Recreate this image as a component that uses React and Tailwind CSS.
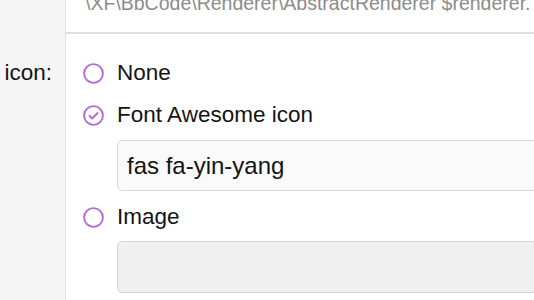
import { useState } from "react";

function Radio({ checked }) {
  return (
    <svg width="21" height="21" viewBox="0 0 21 21" className="shrink-0">
      <circle cx="10.5" cy="10.5" r="9.4" fill="none" stroke="#b168d9" strokeWidth="1.9" />
      {checked && (
        <path d="M6.4 10.8 L9.2 13.5 L14.6 8" fill="none" stroke="#b168d9" strokeWidth="1.9" strokeLinecap="round" strokeLinejoin="round" />
      )}
    </svg>
  );
}

function Option({ label, checked, onClick }) {
  return (
    <div className="flex items-center h-[42px] gap-[13px] cursor-pointer" onClick={onClick}>
      <Radio checked={checked} />
      <span className="text-[22.5px] text-[#141414] leading-none">{label}</span>
    </div>
  );
}

export default function App() {
  const [mode, setMode] = useState("fa");
  const [icon, setIcon] = useState("fas fa-yin-yang");

  return (
    <div className="flex w-[534px] h-[300px] overflow-hidden bg-white font-['Liberation_Sans',Arial,sans-serif]">

      <div className="w-[66px] shrink-0 bg-[#f5f5f5] border-r border-[#e2e2e2] flex flex-col">
        <div className="h-[52px]"></div>
        <div className="h-[42px] flex items-center justify-end pr-[13px] text-[22.5px] text-[#141414] whitespace-nowrap">
          icon:
        </div>
      </div>

      <div className="flex-1 flex flex-col min-w-0">

        <div className="h-[34px] border-b-2 border-[#e0e0e0] overflow-hidden pl-[19px] shrink-0">
          <p className="-mt-[8px] text-[19.5px] leading-[23px] text-[#8c8c8c] whitespace-nowrap">
            \XF\BbCode\Renderer\AbstractRenderer $renderer.
          </p>
        </div>

        <div className="flex flex-col pl-[17px] pt-[18px]">
          <Option label="None" checked={mode === "none"} onClick={() => setMode("none")} />
          <Option label="Font Awesome icon" checked={mode === "fa"} onClick={() => setMode("fa")} />
          <div className="pl-[34px] mt-[4px]">
            <input
              className="w-[440px] h-[51px] rounded-[5px] border border-[#d8d8d8] bg-[#fafafa] px-[9px] text-[24px] text-[#141414] focus:outline-none"
              value={icon}
              disabled={mode !== "fa"}
              onChange={(event) => setIcon(event.target.value)}
            />
          </div>
          <div className="mt-[5px]">
            <Option label="Image" checked={mode === "image"} onClick={() => setMode("image")} />
          </div>
          <div className="pl-[34px] mt-[3px]">
            <input
              className="w-[440px] h-[52px] rounded-[5px] border border-[#d5d5d5] bg-[#f0f0f0] px-[9px] text-[24px] text-[#141414] focus:outline-none"
              disabled={mode !== "image"}
            />
          </div>
        </div>

      </div>
    </div>
  );
}
